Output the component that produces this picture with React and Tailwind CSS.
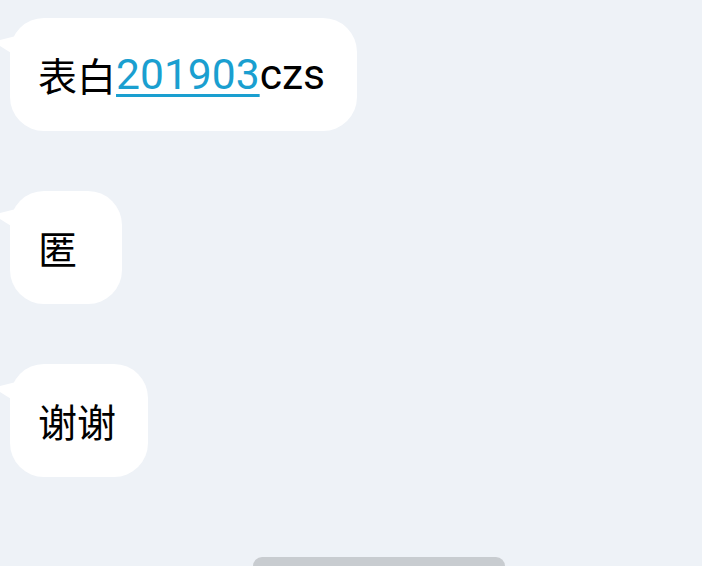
import React from 'react';

// 聊天气泡列表
const mensajes = [
    { id: 1, partes: [{ t: '表白', cjk: true }, { t: '201903', link: true }, { t: 'czs' }] },
    { id: 2, partes: [{ t: '匿', cjk: true }] },
    { id: 3, partes: [{ t: '谢谢', cjk: true }] },
];

const Burbuja = ({ partes }) => (
    <div className="relative self-start">
        {/* cola del globo */}
        <svg className="absolute left-[-10px] top-[18px]" width="16" height="22" viewBox="0 0 16 22">
            <path d="M0 4 L16 0 L16 20 L0 10 Z" fill="#ffffff" />
        </svg>
        <div className="flex items-center h-[113px] min-w-[112px] pl-[28px] pr-[32px] bg-white rounded-[34px]">
            {partes.map((p, i) =>
                p.cjk ? (
                    <span key={i} className="text-[39px] text-black" style={{ fontFamily: '"Noto Sans CJK SC", sans-serif' }}>
                        {p.t}
                    </span>
                ) : (
                    <span
                        key={i}
                        className={`text-[42.6px] ${p.link ? 'text-[#1a9fd0] underline decoration-[3px] underline-offset-[5px]' : 'text-black'}`}
                        style={{ fontFamily: 'Roboto, sans-serif' }}
                    >
                        {p.t}
                    </span>
                )
            )}
        </div>
    </div>
);

const App = () => {
    return (
        <div className="w-[702px] h-[566px] overflow-hidden bg-[#eef2f7] flex flex-col">
            <div className="flex flex-col gap-[60px] pt-[18px] pl-[10px]">
                {mensajes.map((m) => (
                    <Burbuja key={m.id} partes={m.partes} />
                ))}
            </div>
            <div className="flex-1" />
            <div className="flex justify-center pl-[56px] pr-0">
                <div className="w-[252px] h-[9px] bg-[#c8ccd0] rounded-t-[24px]" />
            </div>
        </div>
    );
};

export default App;
